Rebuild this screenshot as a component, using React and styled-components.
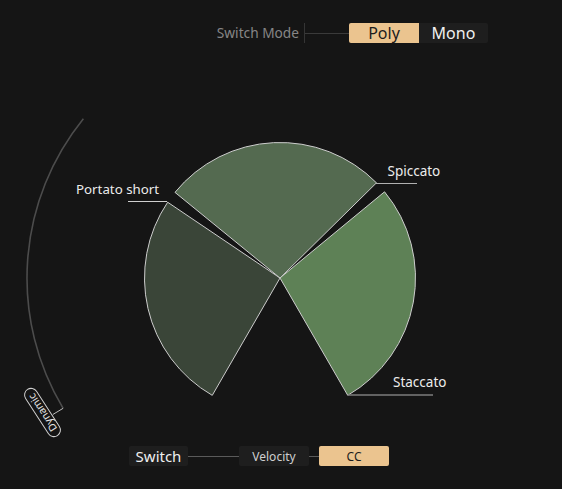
import React from "react";
import styled, { createGlobalStyle } from "styled-components";

const GlobalStyle = createGlobalStyle`
  html, body { margin: 0; padding: 0; background: #151515; }
  body { font-family: "Noto Sans", "Open Sans", sans-serif; }
`;

const Root = styled.div`
  width: 562px;
  height: 489px;
  display: flex;
  flex-direction: column;
  background: #151515;
  overflow: hidden;
`;

const TopBar = styled.div`
  display: flex;
  justify-content: flex-end;
  align-items: center;
  padding: 23px 74px 0 0;
  height: 20px;
`;

const ModeLabel = styled.span`
  font-size: 13.7px;
  color: #868686;
  line-height: 20px;
  margin-right: 5px;
`;

const Divider = styled.div`
  width: 1px;
  align-self: stretch;
  background: #353535;
`;

const Wire = styled.div`
  width: ${(p) => p.$w}px;
  height: 1px;
  background: ${(p) => p.$color || "#3a3a3a"};
`;

const Segment = styled.div`
  width: ${(p) => p.$w}px;
  height: 20px;
  display: flex;
  align-items: center;
  justify-content: center;
  font-size: ${(p) => p.$size}px;
  background: ${(p) => (p.$active ? "#ebc48f" : "#1e1e1e")};
  color: ${(p) => (p.$active ? "#1c1c1c" : p.$muted ? "#cfcfcf" : "#f0f0f0")};
  border-radius: ${(p) => p.$radius};
`;

const ChartArea = styled.div`
  height: 403px;
  flex: none;
`;

const ChartSvg = styled.svg`
  display: block;
  width: 562px;
  height: 403px;
  font-family: "Noto Sans", "Open Sans", sans-serif;
`;

const BottomBar = styled.div`
  display: flex;
  align-items: center;
  padding-left: 129px;
  height: 20px;
`;

const CX = 280;
const CY = 278;

function polar(r, deg) {
  const a = (deg * Math.PI) / 180;
  return [CX + r * Math.cos(a), CY + r * Math.sin(a)];
}

function sectorPath(r, a0, a1) {
  const [x0, y0] = polar(r, a0);
  const [x1, y1] = polar(r, a1);
  const large = a1 - a0 > 180 ? 1 : 0;
  return `M ${CX} ${CY} L ${x0} ${y0} A ${r} ${r} 0 ${large} 1 ${x1} ${y1} Z`;
}

function arcPath(r, a0, a1) {
  const [x0, y0] = polar(r, a0);
  const [x1, y1] = polar(r, a1);
  return `M ${x0} ${y0} A ${r} ${r} 0 0 1 ${x1} ${y1}`;
}

const sectors = [
  { a0: 120, a1: 214, fill: "#3a4538" },
  { a0: 219.2, a1: 315.4, fill: "#546a50" },
  { a0: 320.5, a1: 420, fill: "#5e8156" },
];

export default function App() {
  const [tx0, ty0] = polar(253, 149);
  const [tx1, ty1] = polar(265, 149);
  return (
    <Root>
      <GlobalStyle />
      <TopBar>
        <ModeLabel>Switch Mode</ModeLabel>
        <Divider />
        <Wire $w={44} />
        <Segment $w={70} $size={16} $active $radius="2px 0 0 2px">
          Poly
        </Segment>
        <Segment $w={69} $size={16} $radius="0 2px 2px 0">
          Mono
        </Segment>
      </TopBar>

      <ChartArea>
        <ChartSvg viewBox="0 43 562 403">
          <path
            d={arcPath(253, 149, 219)}
            fill="none"
            stroke="#4c4c4c"
            strokeWidth="1.6"
          />
          <line x1={tx0} y1={ty0} x2={tx1} y2={ty1} stroke="#bdbdbd" strokeWidth="1" />
          <g transform="translate(42.5 412.5) rotate(-123)">
            <rect
              x="-27.5"
              y="-6.5"
              width="55"
              height="13"
              rx="6.5"
              fill="#151515"
              stroke="#d0d0d0"
              strokeWidth="1"
            />
            <text
              x="0"
              y="3.8"
              textAnchor="middle"
              fontSize="10.5"
              fill="#e4e4e4"
            >
              Dynamic
            </text>
          </g>

          {sectors.map((s, i) => (
            <path
              key={i}
              d={sectorPath(135.5, s.a0, s.a1)}
              fill={s.fill}
              stroke="#cdcdcd"
              strokeWidth="1"
              strokeLinejoin="miter"
            />
          ))}

          <line x1="128" y1="201.5" x2="167" y2="201.5" stroke="#cfcfcf" strokeWidth="1" />
          <line x1="376" y1="183.5" x2="417" y2="183.5" stroke="#b0b0b0" strokeWidth="1" />
          <line x1="348" y1="395" x2="433" y2="395" stroke="#7c7c7c" strokeWidth="1.6" />

          <text x="76" y="194" fontSize="13.3" fill="#ececec">
            Portato short
          </text>
          <text x="387.5" y="176" fontSize="13.5" fill="#ececec">
            Spiccato
          </text>
          <text x="393" y="387" fontSize="13.5" fill="#ececec">
            Staccato
          </text>
        </ChartSvg>
      </ChartArea>

      <BottomBar>
        <Segment $w={59} $size={15} $radius="2px">
          Switch
        </Segment>
        <Wire $w={51} $color="#5a5a5a" />
        <Segment $w={70} $size={12} $muted $radius="2px">
          Velocity
        </Segment>
        <Wire $w={10} $color="#5a5a5a" />
        <Segment $w={70} $size={12} $active $radius="2px">
          CC
        </Segment>
      </BottomBar>
    </Root>
  );
}
